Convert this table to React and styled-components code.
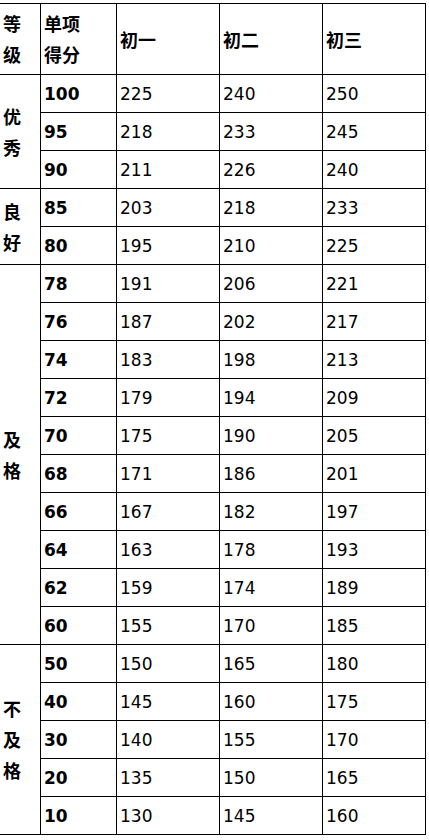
import React from 'react';
import styled, { createGlobalStyle } from 'styled-components';

const GlobalStyle = createGlobalStyle`
  html, body {
    margin: 0;
    padding: 0;
    background: #fff;
  }
`;

const Table = styled.table`
  border-collapse: collapse;
  table-layout: fixed;
  width: 427px;
  margin: 3px 0 0 -1px;
  font-family: "DejaVu Sans", "Noto Sans CJK SC", sans-serif;
  font-size: 17px;
  color: #000;
`;

const HeadRow = styled.tr`
  height: 71px;
`;

const Row = styled.tr`
  height: 38px;
`;

const Cell = styled.td`
  border: 1px solid #000;
  padding: 0 3px;
  vertical-align: middle;
  text-align: left;
  font-weight: ${(p) => (p.$bold ? 700 : 400)};
  line-height: ${(p) => (p.$cjk ? '31px' : '20px')};
  font-family: ${(p) =>
    p.$cjk ? '"Noto Sans CJK SC", sans-serif' : '"DejaVu Sans", sans-serif'};
  font-size: ${(p) => (p.$cjk ? '18px' : '17px')};
  word-break: break-all;
`;

const groups = [
  { level: '优秀', rows: [[100, 225, 240, 250], [95, 218, 233, 245], [90, 211, 226, 240]] },
  { level: '良好', rows: [[85, 203, 218, 233], [80, 195, 210, 225]] },
  {
    level: '及格',
    rows: [
      [78, 191, 206, 221],
      [76, 187, 202, 217],
      [74, 183, 198, 213],
      [72, 179, 194, 209],
      [70, 175, 190, 205],
      [68, 171, 186, 201],
      [66, 167, 182, 197],
      [64, 163, 178, 193],
      [62, 159, 174, 189],
      [60, 155, 170, 185],
    ],
  },
  {
    level: '不及格',
    rows: [
      [50, 150, 165, 180],
      [40, 145, 160, 175],
      [30, 140, 155, 170],
      [20, 135, 150, 165],
      [10, 130, 145, 160],
    ],
  },
];

export default function App() {
  return (
    <>
      <GlobalStyle />
      <Table>
        <colgroup>
          <col style={{ width: 41 }} />
          <col style={{ width: 76 }} />
          <col style={{ width: 103 }} />
          <col style={{ width: 103 }} />
          <col style={{ width: 103 }} />
        </colgroup>
        <tbody>
          <HeadRow>
            <Cell $bold $cjk>等级</Cell>
            <Cell $bold $cjk>
              单项
              <br />
              得分
            </Cell>
            <Cell $bold $cjk>初一</Cell>
            <Cell $bold $cjk>初二</Cell>
            <Cell $bold $cjk>初三</Cell>
          </HeadRow>
          {groups.map((g) =>
            g.rows.map((r, i) => (
              <Row key={r[0]}>
                {i === 0 && (
                  <Cell $bold $cjk rowSpan={g.rows.length}>
                    {g.level}
                  </Cell>
                )}
                <Cell $bold>{r[0]}</Cell>
                <Cell>{r[1]}</Cell>
                <Cell>{r[2]}</Cell>
                <Cell>{r[3]}</Cell>
              </Row>
            ))
          )}
        </tbody>
      </Table>
    </>
  );
}
